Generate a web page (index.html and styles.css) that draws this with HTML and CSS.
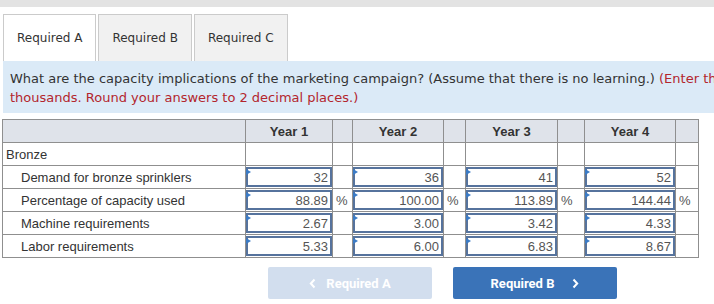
FILE: index.html
```html
<!DOCTYPE html>
<html lang="en">
<head>
    <meta charset="UTF-8">
    <meta name="viewport" content="width=device-width, initial-scale=1.0">
    <link rel="stylesheet" href="styles.css">
    <title>Capacity implications</title>
</head>
<body>

    <div class="topbar"></div>

    <div class="tabs">
        <div class="tab active">Required A</div>
        <div class="tab">Required B</div>
        <div class="tab">Required C</div>
    </div>

    <div class="prompt">
        What are the capacity implications of the marketing campaign? (Assume that there is no learning.) <span class="hint">(Enter the answers in</span><br>
        <span class="hint">thousands. Round your answers to 2 decimal places.)</span>
    </div>

    <table class="grid">
        <colgroup>
            <col class="c-label">
            <col class="c-y1"><col class="c-p1">
            <col class="c-y2"><col class="c-p2">
            <col class="c-y3"><col class="c-p3">
            <col class="c-y4"><col class="c-p4">
        </colgroup>
        <tr class="head">
            <th></th>
            <th>Year 1</th><th></th>
            <th>Year 2</th><th></th>
            <th>Year 3</th><th></th>
            <th>Year 4</th><th></th>
        </tr>
        <tr>
            <td class="label">Bronze</td>
            <td></td><td></td><td></td><td></td><td></td><td></td><td></td><td></td>
        </tr>
        <tr>
            <td class="label sub">Demand for bronze sprinklers</td>
            <td class="cell"><div class="entry">32</div></td><td></td>
            <td class="cell"><div class="entry">36</div></td><td></td>
            <td class="cell"><div class="entry">41</div></td><td></td>
            <td class="cell"><div class="entry">52</div></td><td></td>
        </tr>
        <tr>
            <td class="label sub">Percentage of capacity used</td>
            <td class="cell"><div class="entry">88.89</div></td><td class="unit">%</td>
            <td class="cell"><div class="entry">100.00</div></td><td class="unit">%</td>
            <td class="cell"><div class="entry">113.89</div></td><td class="unit">%</td>
            <td class="cell"><div class="entry">144.44</div></td><td class="unit">%</td>
        </tr>
        <tr>
            <td class="label sub">Machine requirements</td>
            <td class="cell"><div class="entry">2.67</div></td><td></td>
            <td class="cell"><div class="entry">3.00</div></td><td></td>
            <td class="cell"><div class="entry">3.42</div></td><td></td>
            <td class="cell"><div class="entry">4.33</div></td><td></td>
        </tr>
        <tr>
            <td class="label sub">Labor requirements</td>
            <td class="cell"><div class="entry">5.33</div></td><td></td>
            <td class="cell"><div class="entry">6.00</div></td><td></td>
            <td class="cell"><div class="entry">6.83</div></td><td></td>
            <td class="cell"><div class="entry">8.67</div></td><td></td>
        </tr>
    </table>

    <div class="nav">
        <button class="nav-btn prev" disabled>
            <svg width="7" height="11" viewBox="0 0 7 11"><path d="M5.5 1.5 L1.8 5.5 L5.5 9.5" fill="none" stroke="currentColor" stroke-width="2"/></svg>
            <span>Required A</span>
        </button>
        <button class="nav-btn next">
            <span>Required B</span>
            <svg width="7" height="11" viewBox="0 0 7 11"><path d="M1.5 1.5 L5.2 5.5 L1.5 9.5" fill="none" stroke="currentColor" stroke-width="2"/></svg>
        </button>
    </div>

</body>
</html>
```

FILE: styles.css
```css
body {
    margin: 0;
    overflow: hidden;
    background: #fff;
    font-family: "DejaVu Sans", Verdana, sans-serif;
    color: #333;
}

.topbar {
    height: 7px;
    background: #e3e3e3;
}

/* tabs */
.tabs {
    display: flex;
    gap: 2px;
    margin-top: 7px;
    padding-left: 3px;
}
.tab {
    height: 47px;
    box-sizing: border-box;
    display: flex;
    align-items: center;
    padding: 0 13px;
    border: 1px solid #cbcbcb;
    border-bottom: none;
    background: #f1f1f1;
    font-size: 12px;
    color: #333;
}
.tab.active {
    background: #fff;
}

/* question text */
.prompt {
    margin-left: 3px;
    width: 860px;
    padding: 8px 7px 6px;
    background: #dbeaf7;
    font-size: 13px;
    line-height: 19px;
    white-space: nowrap;
}
.prompt .hint {
    color: #b3262d;
}

/* answer table */
.grid {
    margin: 6px 0 0 2px;
    border-collapse: collapse;
    table-layout: fixed;
    width: 696px;
    font-family: "Liberation Sans", Arial, sans-serif;
    font-size: 13px;
    color: #333;
}
.c-label { width: 243px; }
.c-y1 { width: 87px; }
.c-p1 { width: 20px; }
.c-y2 { width: 91px; }
.c-p2 { width: 22px; }
.c-y3 { width: 92px; }
.c-p3 { width: 27px; }
.c-y4 { width: 91px; }
.c-p4 { width: 23px; }

.grid th,
.grid td {
    border: 1px solid #8f8f8f;
    height: 22px;
    padding: 0;
}
.grid .head th {
    background: #dfe3ea;
    font-weight: bold;
    text-align: center;
}
.grid .label {
    padding-left: 3px;
}
.grid .label.sub {
    padding-left: 18px;
}
.grid .unit {
    padding-left: 3px;
    color: #555;
}

.entry {
    position: relative;
    height: 20px;
    margin: 1px 0;
    box-sizing: border-box;
    border: 2px solid #56739d;
    padding-right: 2px;
    text-align: right;
    line-height: 17px;
    color: #555;
    background: #fff;
}
/* little marker in the corner of each entry box */
.entry::before {
    content: "";
    position: absolute;
    left: -2px;
    top: 0;
    border-left: 5px solid #3b7bc6;
    border-top: 3px solid transparent;
    border-bottom: 3px solid transparent;
}

/* prev / next buttons */
.nav {
    display: flex;
    gap: 21px;
    margin: 9px 0 0 268px;
}
.nav-btn {
    width: 164px;
    height: 32px;
    border: none;
    border-radius: 2px;
    display: flex;
    align-items: center;
    justify-content: center;
    gap: 10px;
    font-family: Roboto, "Liberation Sans", sans-serif;
    font-size: 13px;
    font-weight: bold;
    color: #fff;
    cursor: pointer;
}
.nav-btn.prev {
    background: #d2deee;
    cursor: default;
}
.nav-btn.next {
    background: #3a73b8;
    gap: 18px;
}
```
